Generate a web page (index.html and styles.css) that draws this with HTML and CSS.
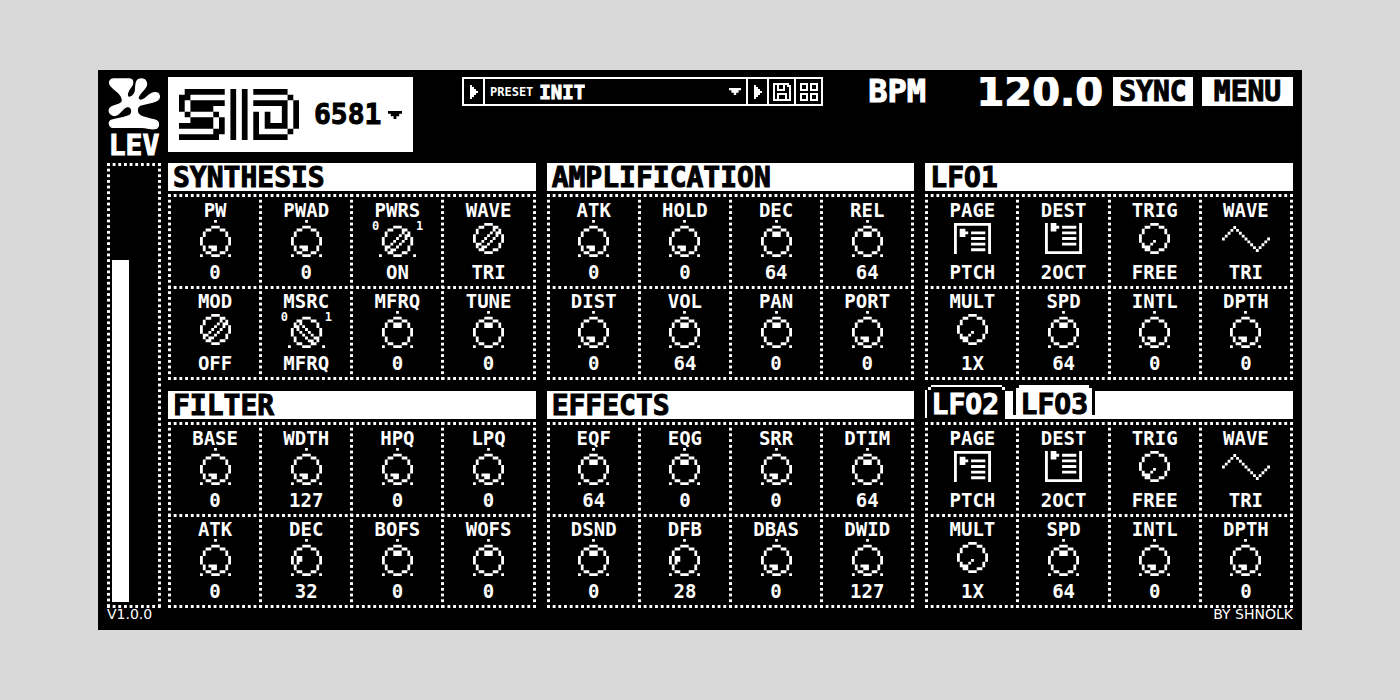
FILE: index.html
```html
<!doctype html>
<html lang="en">
<head>
    <meta charset="UTF-8">
    <meta name="viewport" content="width=device-width, initial-scale=1.0">
    <title>SID 6581</title>
    <link rel="stylesheet" href="styles.css">
</head>
<body>
<div class="device">
    <div class="brand">
        <svg class="brand-mark" viewBox="36 34 162 158" role="img" aria-label="Lev">
            <path d="M52 38H100C114 38 114 52 106 62C98 72 90 88 98 94C108 96 118 86 120 74C122 60 118 38 138 38C152 38 158 52 150 64C142 76 126 86 128 98C132 108 146 102 154 94C164 84 172 80 180 80C194 80 198 96 186 104C172 112 152 112 134 118C122 124 122 142 134 150C148 158 166 160 180 164C194 168 194 188 178 190C164 192 156 186 140 186H54C38 186 36 168 48 164C66 158 92 156 104 148C112 140 110 124 98 122C86 122 78 136 66 146C52 156 34 142 42 128C48 118 68 120 78 110C84 100 76 88 66 78C56 68 44 62 41 52C40 44 44 38 52 38Z"/>
        </svg>
        <label for="level" class="brand-name">LEV</label>
    </div>

    <div class="topbar">
        <div class="model">
            <svg class="model-logo" data-art="sid"></svg>
            <label class="drop">
                <select class="model-select" aria-label="Chip model">
                    <option>6581</option>
                    <option>8580</option>
                </select>
                <svg class="arrow" data-art="down"></svg>
            </label>
        </div>
        <div class="preset">
            <button type="button" class="preset-button" aria-label="Previous preset"><svg class="play" data-art="right"></svg></button>
            <label class="preset-drop">
                <span class="preset-label">PRESET</span>
                <select class="preset-select">
                    <option>INIT</option>
                </select>
                <svg class="arrow small" data-art="down"></svg>
            </label>
            <button type="button" class="preset-button" aria-label="Next preset"><svg class="play" data-art="right"></svg></button>
            <button type="button" class="preset-button wide" aria-label="Save"><svg class="tool" data-art="save"></svg></button>
            <button type="button" class="preset-button wide" aria-label="Browse"><svg class="tool" data-art="tiles"></svg></button>
        </div>
        <label for="bpm" class="bpm-label">BPM</label>
        <input type="text" id="bpm" class="bpm" value="120.0">
        <button type="button" class="button sync">SYNC</button>
        <button type="button" class="button">MENU</button>
    </div>

    <div class="rail">
        <div class="rail-bar"></div>
        <input type="range" id="level" class="hidden-range" min="0" max="127" value="98">
    </div>

    <div class="panels">
        <div class="panel">
            <h2 class="title">SYNTHESIS</h2>
            <div class="cells" data-panel="synthesis"></div>
        </div>
        <div class="panel">
            <h2 class="title">AMPLIFICATION</h2>
            <div class="cells" data-panel="amplification"></div>
        </div>
        <div class="panel">
            <h2 class="title">LFO1</h2>
            <div class="cells" data-panel="lfo"></div>
        </div>
        <div class="panel">
            <h2 class="title">FILTER</h2>
            <div class="cells" data-panel="filter"></div>
        </div>
        <div class="panel">
            <h2 class="title">EFFECTS</h2>
            <div class="cells" data-panel="effects"></div>
        </div>
        <div class="panel">
            <div class="title tabs">
                <button type="button" class="tab active">LFO2</button>
                <button type="button" class="tab">LFO3</button>
            </div>
            <div class="cells" data-panel="lfo"></div>
        </div>
    </div>

    <div class="footer">
        <span>V1.0.0</span>
        <span>BY SHNOLK</span>
    </div>
</div>

<script src="script.js"></script>
</body>
</html>
```
FILE: styles.css
```css
*
{
    box-sizing: border-box;
}
body
{
    margin: 0;
    background-color: #d9d9d9;
    color: #fff;
    font-family: "DejaVu Sans Mono", monospace;
    font-weight: bold;
}
button, input, select
{
    margin: 0;
    padding: 0;
    border: 0;
    border-radius: 0;
    background: none;
    color: inherit;
    font: inherit;
    appearance: none;
}
svg
{
    display: block;
    fill: currentColor;
    flex: none;
}
.device
{
    display: grid;
    grid-template-columns: 54px minmax(0, 1fr);
    column-gap: 7px;
    margin: 70px 7vw;
    padding: 7px 9px 0;
    background-color: #000;
}

/* heavy lettering */
.brand-name, .model-select, .preset-select, .bpm-label, .bpm, .button, .title, .tab
{
    -webkit-text-stroke: 1px currentColor;
}

/* logo column */
.brand
{
    display: flex;
    flex-direction: column;
    align-items: center;
    height: 86px;
}
.brand-mark
{
    width: 53px;
    height: 53px;
    stroke: currentColor;
    stroke-width: 4px;
}
.brand-name
{
    font-size: 28px;
    line-height: 32px;
}

/* top bar */
.topbar
{
    display: flex;
    align-items: flex-start;
}
.model
{
    display: flex;
    align-items: center;
    justify-content: space-between;
    width: 245px;
    height: 75px;
    padding: 0 11px;
    background-color: #fff;
    color: #000;
}
.model-logo
{
    width: 120px;
    height: 51px;
}
.drop
{
    display: flex;
    align-items: center;
    gap: 6px;
}
.model-select
{
    font-size: 28px;
}
.arrow
{
    width: 14px;
    height: 8px;
}
.arrow.small
{
    width: 12px;
    height: 7px;
    margin-left: auto;
}
.preset
{
    display: flex;
    width: 361px;
    height: 29px;
    margin-left: 49px;
    border: 2px solid #fff;
}
.preset-button
{
    display: flex;
    align-items: center;
    justify-content: center;
    width: 21px;
    border-left: 2px solid #fff;
}
.preset-button:first-child
{
    border-left: 0;
    border-right: 2px solid #fff;
}
.preset-button.wide
{
    width: 27px;
}
.play
{
    width: 8px;
    height: 14px;
}
.tool
{
    width: 18px;
    height: 18px;
}
.preset-drop
{
    display: flex;
    flex: 1;
    align-items: center;
    gap: 6px;
    padding: 0 5px;
}
.preset-label
{
    font-size: 12px;
}
.preset-select
{
    font-size: 19px;
}
.bpm-label
{
    margin-left: auto;
    font-size: 32px;
    line-height: 29px;
}
.bpm
{
    width: 130px;
    height: 29px;
    margin: 0 10px 0 47px;
    font-family: "DejaVu Sans", sans-serif;
    font-size: 40px;
    line-height: 29px;
    text-align: right;
}
.button
{
    width: 91px;
    height: 29px;
    background-color: #fff;
    color: #000;
    font-size: 28px;
    line-height: 29px;
}
.button.sync
{
    width: 80px;
    margin-right: 9px;
}

/* dotted lines */
.rail, .cells
{
    --across: linear-gradient(90deg, #fff 50%, transparent 50%);
    --down: linear-gradient(#fff 50%, transparent 50%);
}
.rail
{
    position: relative;
    padding: 97px 5px 6px;
    background:
        var(--across) 0 0 / calc((100% - 3px) / 9) 3px repeat-x,
        var(--across) 0 100% / calc((100% - 3px) / 9) 3px repeat-x,
        var(--down) 0 0 / 3px calc((100% - 3px) / 78) repeat-y,
        var(--down) 100% 0 / 3px calc((100% - 3px) / 78) repeat-y;
}
.rail-bar
{
    width: 17px;
    height: 100%;
    background-color: #fff;
}
.hidden-range
{
    position: absolute;
    inset: 0;
    width: 100%;
    height: 100%;
    opacity: 0;
}

/* panels */
.panels
{
    display: grid;
    grid-template-columns: repeat(3, minmax(0, 1fr));
    gap: 11px;
}
.title
{
    height: 28px;
    margin: 0 0 3px;
    padding-left: 5px;
    background-color: #fff;
    color: #000;
    font-size: 28px;
    font-weight: bold;
    line-height: 30px;
}
.tabs
{
    display: flex;
    gap: 8px;
    padding: 0;
}
.tab
{
    width: 82px;
    height: 34px;
    margin-top: -6px;
    padding-top: 6px;
    line-height: 28px;
    background:
        linear-gradient(#000, #000) 0 6px / 3px 24px no-repeat,
        linear-gradient(#000, #000) 100% 6px / 3px 24px no-repeat,
        linear-gradient(#fff, #fff) 6px 0 / calc(100% - 12px) 3px no-repeat,
        linear-gradient(#fff, #fff) 3px 3px / calc(100% - 6px) 31px no-repeat;
}
.tab.active
{
    width: 80px;
    color: #fff;
    background:
        linear-gradient(#fff, #fff) 6px 0 / calc(100% - 9px) 2px no-repeat,
        linear-gradient(#fff, #fff) 3px 2px / 3px 3px no-repeat,
        linear-gradient(#fff, #fff) 100% 2px / 3px 3px no-repeat,
        linear-gradient(#fff, #fff) 0 5px / 2px 28px no-repeat,
        #000;
}
.cells
{
    display: grid;
    grid-template-columns: repeat(4, minmax(0, 1fr));
    grid-auto-rows: 91px;
    padding: 1px 3px 3px 0;
    background:
        var(--across) 0 0 / calc((100% - 3px) / 64) 3px repeat-x,
        var(--across) 0 50% / calc((100% - 3px) / 64) 3px repeat-x,
        var(--across) 0 100% / calc((100% - 3px) / 64) 3px repeat-x,
        var(--down) 0 0 / 3px calc((100% - 3px) / 32) repeat-y,
        var(--down) 25% 0 / 3px calc((100% - 3px) / 32) repeat-y,
        var(--down) 50% 0 / 3px calc((100% - 3px) / 32) repeat-y,
        var(--down) 75% 0 / 3px calc((100% - 3px) / 32) repeat-y,
        var(--down) 100% 0 / 3px calc((100% - 3px) / 32) repeat-y;
}
.cell
{
    position: relative;
    display: flex;
    flex-direction: column;
    align-items: center;
    padding: 5px 0 0 3px;
    font-size: 19px;
    line-height: 20px;
}
.dial
{
    display: flex;
    align-items: center;
    justify-content: center;
    height: 37px;
    margin-bottom: 5px;
}
.mark
{
    align-self: flex-start;
    width: 7px;
    font-size: 12px;
    line-height: 12px;
    text-align: center;
}

.footer
{
    display: flex;
    grid-column: 1 / -1;
    justify-content: space-between;
    height: 22px;
    font-family: "DejaVu Sans", sans-serif;
    font-size: 14px;
    font-weight: normal;
    line-height: 13px;
}
```
FILE: script.js
```javascript
// every icon is a small bitmap, one "#" per lit pixel
const RING = [
    "....###....",
    "..##...##..",
    ".#.......#.",
    ".#.......#.",
    "#.........#",
    "#.........#",
    "#.........#",
    ".#.......#.",
    ".#.......#.",
    "..##...##..",
    "....###...."
];

// adds pixels [row, col] to a copy of a bitmap
function plot(rows, dots) {
    const grid = rows.map(r => r.split(""));
    dots.forEach(([r, c]) => grid[r][c] = "#");
    return grid.map(r => r.join(""));
}

// tick marks above and at both lower corners
function ticks(rows) {
    const out = [".....#.....", "..........."].concat(rows);
    return plot(out, [[12, 0], [12, 10]]);
}

function wideTicks(rows) {
    const out = [".............", "............."].concat(rows.map(r => "." + r + "."));
    return plot(out, [[12, 0], [12, 12]]);
}

const SLOT = [[2, 7], [3, 6], [4, 5], [5, 4], [6, 3], [7, 2], [8, 3], [8, 4], [7, 5], [6, 6], [5, 7], [4, 8], [3, 8]];

const ART = {
    min: ticks(plot(RING, [[7, 3], [7, 4], [7, 5], [8, 4], [8, 5]])),
    mid: ticks(plot(RING, [[2, 4], [2, 5], [2, 6], [3, 4], [3, 5], [3, 6]])),
    left: ticks(plot(RING, [[4, 2], [4, 3], [5, 2], [5, 3], [6, 2]])),
    pick: plot(RING, SLOT),
    on: wideTicks(plot(RING, SLOT)),
    off: wideTicks(plot(RING, SLOT.map(([r, c]) => [r, 10 - c]))),
    hand: plot(RING, [[6, 5], [7, 4], [8, 3], [8, 2]]),
    page: [
        "#############",
        "#...........#",
        "#.##........#",
        "#.###.#####.#",
        "#.##........#",
        "#.....#####.#",
        "#...........#",
        "#.....#####.#",
        "#...........#",
        "#.....#####.#",
        "#...........#"
    ],
    dest: [
        "#.##........#",
        "#.###.#####.#",
        "#.##........#",
        "#.....#####.#",
        "#...........#",
        "#.....#####.#",
        "#...........#",
        "#.....#####.#",
        "#...........#",
        "#...........#",
        "#############"
    ],
    tri: [
        "....#............",
        "...#.#...........",
        "..#...#..........",
        ".#.....#.........",
        "#.......#.......#",
        ".........#.....#.",
        "..........#...#..",
        "...........#.#...",
        "............#...."
    ],
    down: [
        "#####",
        ".###.",
        "..#.."
    ],
    right: [
        "#...",
        "##..",
        "###.",
        "####",
        "###.",
        "##..",
        "#..."
    ],
    save: [
        "########.",
        "#.#..#.##",
        "#.#..#..#",
        "#.####..#",
        "#.......#",
        "#.#####.#",
        "#.#...#.#",
        "#.#...#.#",
        "#########"
    ],
    tiles: [
        "####.####",
        "#..#.#..#",
        "#..#.#..#",
        "####.####",
        ".........",
        "####.####",
        "#..#.#..#",
        "#..#.#..#",
        "####.####"
    ],
    sid: [
        ".#######.#.#.######..",
        "##.......#.#.......#.",
        "#.######.#.#.######.#",
        "#.####...#.#......#.#",
        ".#....#..#.#.#.#..#.#",
        "..####.#.#.#.#.#..#.#",
        "######.#.#.#.#.####.#",
        "......##.#.#.#.....#.",
        "#######..#.#.######.."
    ]
};

const PANELS = {
    synthesis: [
        ["PW", "min", "0"], ["PWAD", "min", "0"], ["PWRS", "on", "ON"], ["WAVE", "pick", "TRI"],
        ["MOD", "pick", "OFF"], ["MSRC", "off", "MFRQ"], ["MFRQ", "mid", "0"], ["TUNE", "mid", "0"]
    ],
    amplification: [
        ["ATK", "min", "0"], ["HOLD", "min", "0"], ["DEC", "mid", "64"], ["REL", "mid", "64"],
        ["DIST", "min", "0"], ["VOL", "mid", "64"], ["PAN", "mid", "0"], ["PORT", "min", "0"]
    ],
    lfo: [
        ["PAGE", "page", "PTCH"], ["DEST", "dest", "2OCT"], ["TRIG", "hand", "FREE"], ["WAVE", "tri", "TRI"],
        ["MULT", "hand", "1X"], ["SPD", "mid", "64"], ["INTL", "min", "0"], ["DPTH", "min", "0"]
    ],
    filter: [
        ["BASE", "min", "0"], ["WDTH", "min", "127"], ["HPQ", "min", "0"], ["LPQ", "min", "0"],
        ["ATK", "min", "0"], ["DEC", "left", "32"], ["BOFS", "mid", "0"], ["WOFS", "mid", "0"]
    ],
    effects: [
        ["EQF", "mid", "64"], ["EQG", "mid", "0"], ["SRR", "min", "0"], ["DTIM", "mid", "64"],
        ["DSND", "mid", "0"], ["DFB", "left", "28"], ["DBAS", "min", "0"], ["DWID", "min", "127"]
    ]
};

function pixels(rows) {
    let d = "";
    rows.forEach((row, y) => {
        for (const run of row.matchAll(/#+/g)) {
            d += `M${run.index} ${y}h${run[0].length}v1h-${run[0].length}z`;
        }
    });
    return `<path d="${d}"/>`;
}

document.querySelectorAll("svg[data-art]").forEach(svg => {
    const rows = ART[svg.dataset.art];
    svg.setAttribute("viewBox", `0 0 ${rows[0].length} ${rows.length}`);
    svg.setAttribute("preserveAspectRatio", "none");
    svg.innerHTML = pixels(rows);
});

function icon(name) {
    const rows = ART[name];
    const w = Math.round(rows[0].length * 91 / 32);
    const h = Math.round(rows.length * 91 / 32);
    return `<svg width="${w}" height="${h}" viewBox="0 0 ${rows[0].length} ${rows.length}" preserveAspectRatio="none">${pixels(rows)}</svg>`;
}

document.querySelectorAll(".cells").forEach(box => {
    box.innerHTML = PANELS[box.dataset.panel].map(([name, art, value]) => {
        const sw = art === "on" || art === "off";
        return `<label class="cell">
            <span>${name}</span>
            <span class="dial">${sw ? '<span class="mark">0</span>' : ""}${icon(art)}${sw ? '<span class="mark">1</span>' : ""}</span>
            <output>${value}</output>
            <input type="range" class="hidden-range" min="0" max="127" value="${parseInt(value) || 0}">
        </label>`;
    }).join("");
});
```
